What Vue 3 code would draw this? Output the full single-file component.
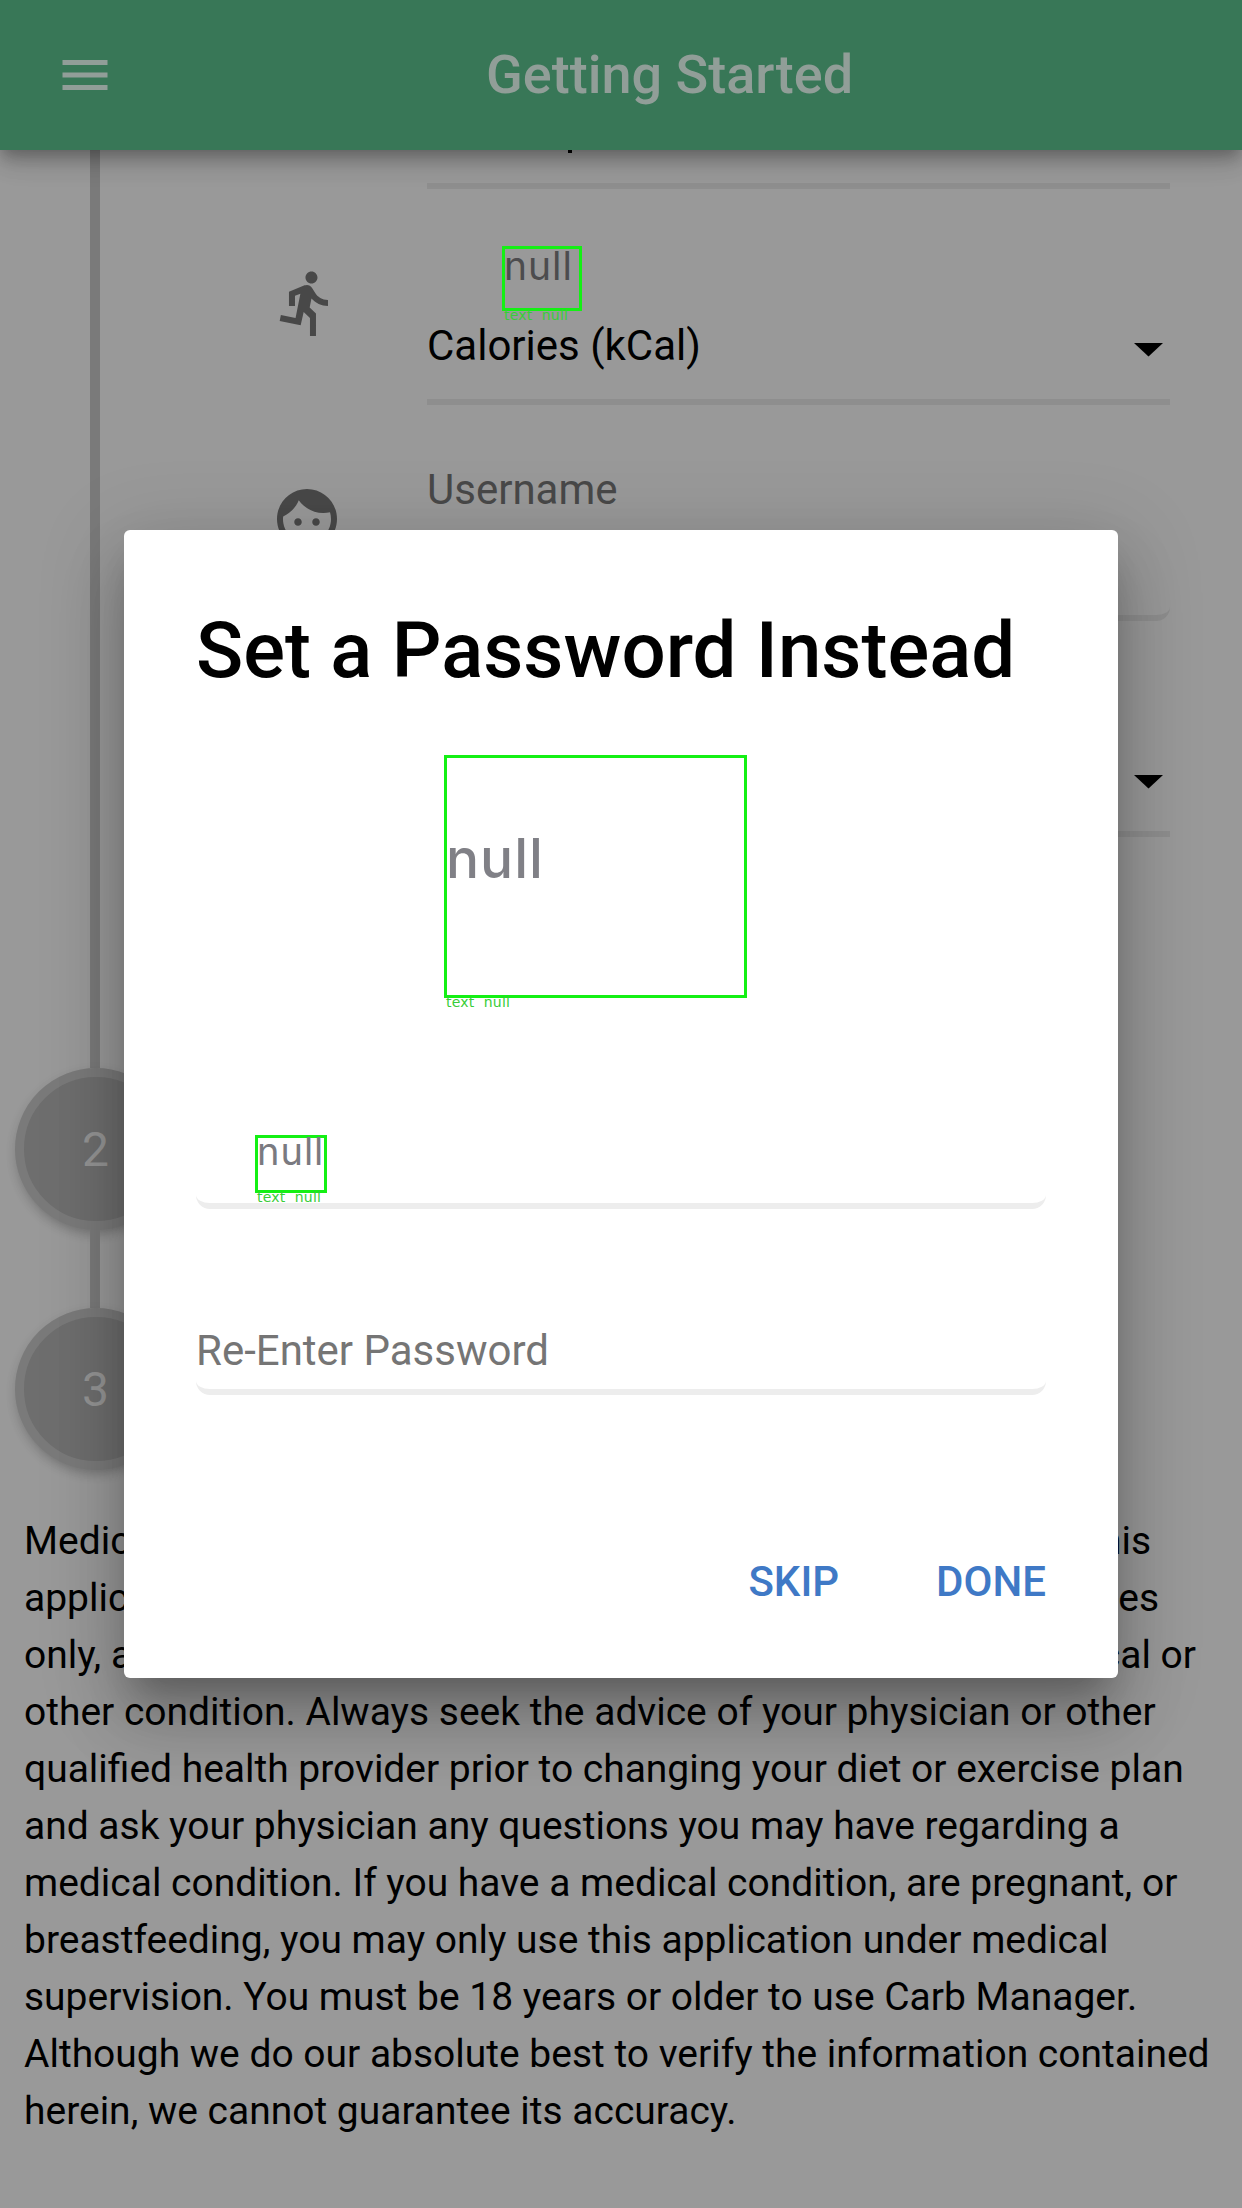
<script setup>
const disclaimer = [
  'other condition. Always seek the advice of your physician or other',
  'qualified health provider prior to changing your diet or exercise plan',
  'and ask your physician any questions you may have regarding a',
  'medical condition. If you have a medical condition, are pregnant, or',
  'breastfeeding, you may only use this application under medical',
  'supervision. You must be 18 years or older to use Carb Manager.',
  'Although we do our absolute best to verify the information contained',
  'herein, we cannot guarantee its accuracy.',
]
</script>

<template>
  <div class="screen">
    <header class="bar">
      <svg class="menu" viewBox="0 0 24 24"><path d="M3 18h18v-2H3v2zm0-5h18v-2H3v2zm0-7v2h18V6H3z" /></svg>
      <h1 class="bar-title">Getting Started</h1>
    </header>

    <main class="content">
      <div class="steps">
        <i class="rail rail-long"></i>
        <div class="step"><span>2</span></div>
        <i class="rail rail-short"></i>
        <div class="step"><span>3</span></div>
      </div>
      <div class="form">
        <div class="row first">
          <div class="cell"><i class="descender"></i></div>
        </div>
        <div class="row">
          <svg class="icon" viewBox="0 0 24 24"><path d="M13.49 5.48c1.1 0 2-.9 2-2s-.9-2-2-2-2 .9-2 2 .9 2 2 2zm-3.6 13.9l1-4.4 2.1 2v6h2v-7.5l-2.1-2 .6-3c1.3 1.5 3.3 2.5 5.5 2.5v-2c-1.9 0-3.5-1-4.3-2.4l-1-1.6c-.4-.6-1-1-1.7-1-.3 0-.5.1-.8.1l-5.2 2.2v4.7h2v-3.4l1.8-.7-1.6 8.1-4.9-1-.4 2 7 1.4z" /></svg>
          <div class="cell select">
            <span class="value">Calories (kCal)</span>
            <svg class="arrow" viewBox="0 0 29 14"><path d="M0 0h29L14.5 13.5z" /></svg>
          </div>
        </div>
        <div class="row">
          <svg class="icon" viewBox="0 0 24 24"><path d="M9 11.75c-.69 0-1.25.56-1.25 1.25s.56 1.25 1.25 1.25 1.25-.56 1.25-1.25-.56-1.25-1.25-1.25zm6 0c-.69 0-1.25.56-1.25 1.25s.56 1.25 1.25 1.25 1.25-.56 1.25-1.25-.56-1.25-1.25-1.25zM12 2C6.48 2 2 6.48 2 12s4.48 10 10 10 10-4.48 10-10S17.52 2 12 2zm0 18c-4.41 0-8-3.59-8-8 0-.29.02-.58.05-.86 2.36-1.05 4.23-2.98 5.21-5.37C11.07 8.33 14.05 10 17.42 10c.78 0 1.53-.09 2.25-.26.21.71.33 1.47.33 2.26 0 4.41-3.59 8-8 8z" /></svg>
          <div class="cell input"><span class="label">Username</span></div>
        </div>
        <div class="row">
          <i class="icon"></i>
          <div class="cell select">
            <span class="value"></span>
            <svg class="arrow" viewBox="0 0 29 14"><path d="M0 0h29L14.5 13.5z" /></svg>
          </div>
        </div>
      </div>
    </main>

    <section class="legal">
      <p class="split l1"><span>Medical</span><span>This</span></p>
      <p class="split l2"><span>application</span><span>uses</span></p>
      <p class="split l3"><span>only, and</span><span>medical or</span></p>
      <p v-for="line in disclaimer" :key="line">{{ line }}</p>
    </section>

    <div class="mark m1"><span class="word">null</span><span class="tag">text&nbsp; null</span></div>

    <div class="dialog">
      <h2 class="dialog-title">Set a Password Instead</h2>
      <div class="field f1"></div>
      <div class="field f2"><span>Re-Enter Password</span></div>
      <div class="actions"><button>SKIP</button><button>DONE</button></div>
    </div>

    <div class="mark m2"><span class="word">null</span><span class="tag">text&nbsp; null</span></div>
    <div class="mark m3"><span class="word">null</span><span class="tag">text&nbsp; null</span></div>
  </div>
</template>

<style>
body { margin: 0; background: #999; }
</style>

<style scoped>
* { box-sizing: border-box; }
h1, h2, p { margin: 0; font-weight: 400; }
.screen { position: relative; width: 1242px; height: 2208px; overflow: hidden; background: #999; font-family: Roboto, sans-serif; color: #000; }
.bar { position: relative; z-index: 1; height: 150px; display: flex; align-items: center; background: #387757; padding-left: 55px;
  box-shadow: 0 8px 13px -3px rgba(0,0,0,.2), 0 13px 20px 0 rgba(0,0,0,.14), 0 3px 36px 0 rgba(0,0,0,.12); }
.menu { width: 60px; height: 60px; fill: #919e98; }
.bar-title { margin-left: 371px; font-size: 54px; line-height: 64px; font-weight: 500; color: #919e98; white-space: nowrap; }
.content { display: flex; height: 1320px; }
.steps { width: 192px; display: flex; flex-direction: column; align-items: center; }
.rail { width: 10px; background: #7a7a7a; margin-right: 2px; flex: none; }
.rail-long { height: 918px; }
.rail-short { height: 78px; }
.step { width: 162px; height: 162px; flex: none; border-radius: 50%; border: 9px solid #7a7a7a; background: #6e6e6e; color: #949494;
  display: flex; align-items: center; justify-content: center; font-size: 48px; line-height: 56px; padding: 2px 1px 0 0;
  box-shadow: 0 6px 12px -3px rgba(0,0,0,.22), 0 3px 13px 0 rgba(0,0,0,.05); }
.form { flex: 1; }
.row { height: 216px; display: flex; padding-left: 79px; }
.first { height: 39px; padding-left: 235px; }
.icon { width: 72px; height: 72px; margin: 78px 84px 0 0; fill: #484848; flex: none; }
.cell { width: 743px; border-bottom: 6px solid #8e8e8e; }
.descender { display: block; width: 4px; height: 3px; margin-left: 141px; background: #000; position: relative; z-index: 2; }
.select { display: flex; justify-content: space-between; padding: 132px 7px 0 0; }
.value, .label { font-size: 42px; line-height: 50px; }
.arrow { width: 29px; height: 14px; margin-top: 22px; }
.input { border-radius: 14px; padding-top: 60px; }
.label { color: #484848; }
.legal { margin-top: 43px; padding-left: 24px; font-size: 38.97px; line-height: 57px; white-space: nowrap; }
.split { display: flex; justify-content: space-between; }
.l1 { width: 1127px; }
.l2 { width: 1135px; }
.l3 { width: 1172px; }
.dialog { position: absolute; left: 124px; top: 530px; width: 994px; height: 1148px; padding: 75px 72px 0; border-radius: 6px; background: #fff;
  box-shadow: 0 24px 30px -13px rgba(0,0,0,.22), 0 43px 64px 5px rgba(0,0,0,.15), 0 16px 80px 13px rgba(0,0,0,.13); }
.dialog-title { font-size: 78px; line-height: 92px; font-weight: 500; white-space: nowrap; }
.field { height: 151px; border-bottom: 6px solid #ededed; border-radius: 14px; }
.f1 { margin-top: 361px; }
.f2 { margin-top: 35px; padding-top: 82px; font-size: 42px; line-height: 50px; color: #757575; }
.actions { display: flex; justify-content: flex-end; gap: 97px; margin-top: 162px; }
.actions button { border: 0; padding: 0; background: none; font: 500 42px/50px Roboto, sans-serif; color: #3f79c6; }
.mark { position: absolute; border: 3px solid #14f014; font-family: Inter, sans-serif; }
.word { position: absolute; white-space: nowrap; }
.tag { position: absolute; left: -1px; bottom: -15px; font: 14px/16px "DejaVu Sans", sans-serif; letter-spacing: .2px; color: #38cd38; white-space: nowrap; }
.m1 { left: 502px; top: 246px; width: 80px; height: 65px; }
.m1 .word { left: -1px; top: -7px; font-size: 39px; line-height: 48px; letter-spacing: 1px; color: #4c4c4e; }
.m2 { left: 444px; top: 755px; width: 303px; height: 243px; }
.m2 .word { left: -1px; top: 67px; font-size: 55px; line-height: 66px; letter-spacing: 1px; font-weight: 500; color: #808086; }
.m3 { left: 255px; top: 1135px; width: 72px; height: 58px; }
.m3 .word { left: -1px; top: -10px; font-size: 38px; line-height: 46px; letter-spacing: 1px; color: #7a7a80; }
</style>
